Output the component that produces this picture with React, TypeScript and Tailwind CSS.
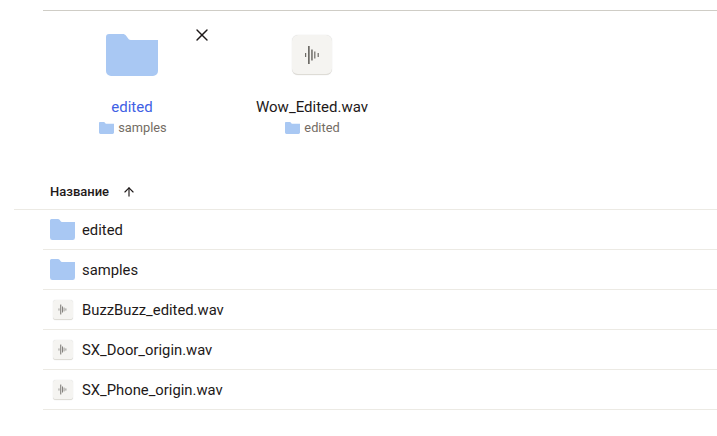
import React from 'react';
import { ArrowUp, X } from 'lucide-react';

const FolderIcon = ({ className }: { className: string }) => (
  <svg viewBox="0 0 52 42" className={className} preserveAspectRatio="none">
    <path
      d="M0 3a3 3 0 0 1 3-3h13.5c1.6 0 2.8.6 3.8 2l2.4 3.2c.6.6 1.2.8 2 .8H52v31a5 5 0 0 1-5 5H5a5 5 0 0 1-5-5z"
      fill="#a9c8f3"
    />
  </svg>
);

const WaveBars = ({ className }: { className: string }) => (
  <svg viewBox="0 0 14 20" className={className}>
    <g fill="#6e6c67">
      <rect x="0" y="8" width="1.2" height="4" />
      <rect x="3" y="1" width="1.7" height="18" />
      <rect x="6.2" y="4.5" width="1.5" height="11" />
      <rect x="9.2" y="6.5" width="1.2" height="7" />
      <rect x="12.6" y="8" width="1.2" height="4" />
    </g>
  </svg>
);

const FileIcon = ({ big }: { big?: boolean }) => (
  <div
    className={`flex items-center justify-center bg-[#f5f4f1] border-b border-[#dedcd6] shadow-[0_0_1px_rgba(0,0,0,0.2)] ${
      big ? 'w-10 h-10 rounded-md' : 'w-5 h-5 rounded-[3px]'
    }`}
  >
    <WaveBars className={big ? 'w-[14px] h-[20px]' : 'w-[9px] h-[11px]'} />
  </div>
);

const rows = [
  { name: 'edited', folder: true },
  { name: 'samples', folder: true },
  { name: 'BuzzBuzz_edited.wav', folder: false },
  { name: 'SX_Door_origin.wav', folder: false },
  { name: 'SX_Phone_origin.wav', folder: false },
];

export default function App() {
  return (
    <div className="w-[717px] h-[436px] bg-white overflow-hidden font-['Roboto','Liberation_Sans',sans-serif] text-[#1e1919]">
      <div className="h-[11px] ml-[43px] border-b border-[#cfcdc6]" />

      <div className="flex pl-[42px] pt-[23px] h-[163px]">
        <div className="relative w-[180px] flex flex-col items-center">
          <FolderIcon className="w-[52px] h-[42px]" />
          <div className="mt-[21px] text-[15px] leading-5 text-[#4060e4]">edited</div>
          <div className="mt-[2px] pl-[2px] flex items-center gap-1 text-[12.8px] leading-[18px] text-[#736c64]">
            <FolderIcon className="w-[15px] h-[12px]" />
            samples
          </div>
          <button className="absolute left-[150px] top-[-9px] text-[#1e1919]">
            <X size={20} strokeWidth={1.7} />
          </button>
        </div>
        <div className="w-[180px] flex flex-col items-center">
          <div className="mt-[1px]">
            <FileIcon big />
          </div>
          <div className="mt-[22px] text-[15px] leading-5">Wow_Edited.wav</div>
          <div className="mt-[2px] pl-[1px] flex items-center gap-1 text-[12.8px] leading-[18px] text-[#736c64]">
            <FolderIcon className="w-[15px] h-[12px]" />
            edited
          </div>
        </div>
      </div>

      <div className="ml-[14px] h-[36px] pl-9 flex items-center gap-[13px] border-b border-[#eceae4] text-[13px] font-medium">
        Название
        <ArrowUp size={14} strokeWidth={2} />
      </div>

      <div className="ml-[43px]">
        {rows.map((row) => (
          <div key={row.name} className="h-10 flex items-center border-b border-[#eceae4] text-[14.8px]">
            <div className="w-[39px] flex justify-center">
              {row.folder ? <FolderIcon className="w-[25px] h-[21px]" /> : <FileIcon />}
            </div>
            <span className="pt-[2px]">{row.name}</span>
          </div>
        ))}
      </div>
    </div>
  );
}
